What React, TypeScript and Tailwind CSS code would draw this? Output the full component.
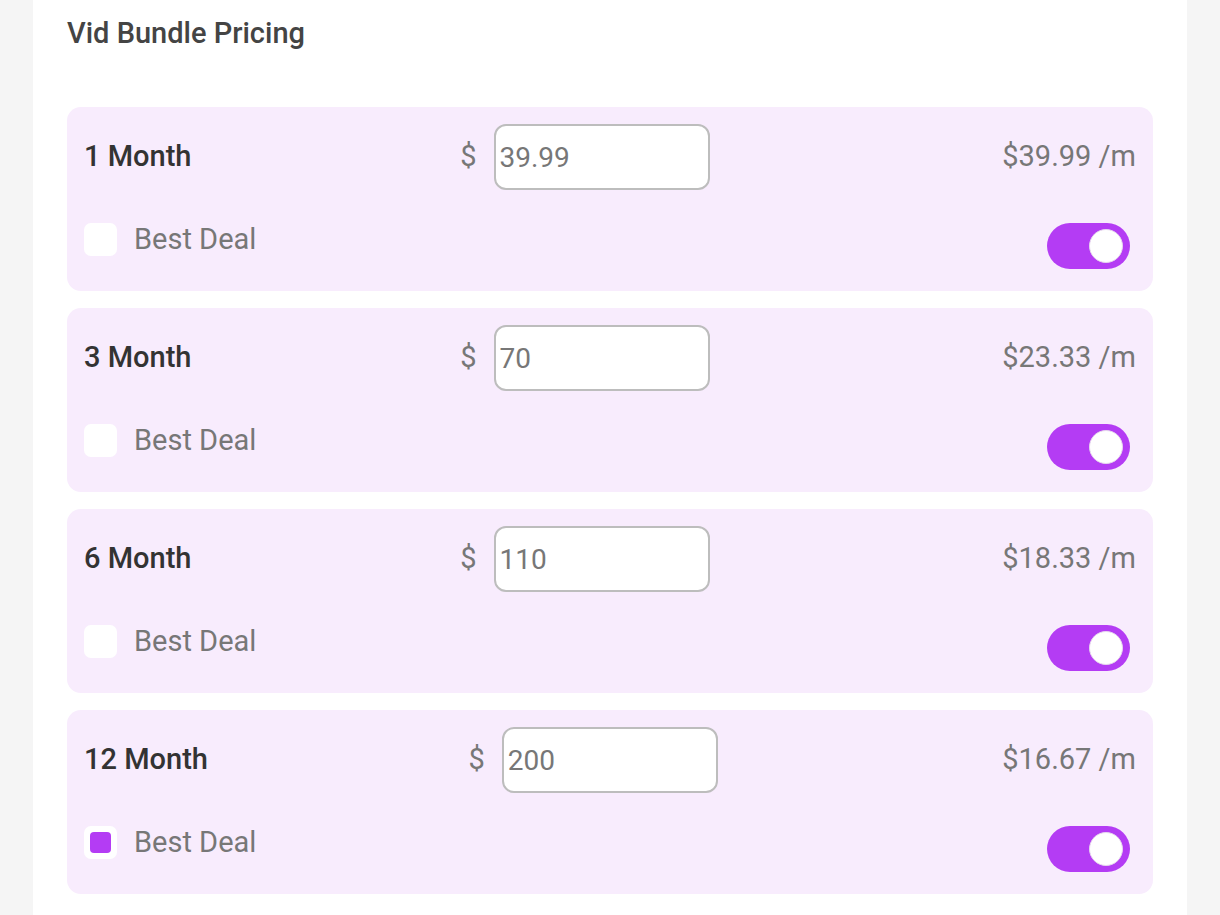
import React, { useState } from 'react';

type Plan = {
  label: string;
  price: string;
  perMonth: string;
  bestDeal: boolean;
};

const initialPlans: Plan[] = [
  { label: '1 Month', price: '39.99', perMonth: '$39.99 /m', bestDeal: false },
  { label: '3 Month', price: '70', perMonth: '$23.33 /m', bestDeal: false },
  { label: '6 Month', price: '110', perMonth: '$18.33 /m', bestDeal: false },
  { label: '12 Month', price: '200', perMonth: '$16.67 /m', bestDeal: true },
];

const PlanCard: React.FC<{ plan: Plan }> = ({ plan }) => {
  const [price, setPrice] = useState(plan.price);
  const [best, setBest] = useState(plan.bestDeal);
  const [enabled, setEnabled] = useState(true);

  return (
    <div className="bg-[#f8ecfd] rounded-[14px] px-[17px] pt-[17px] pb-[22px]">
      <div className="flex items-center justify-between">
        <span className="text-[29px] font-medium text-[#333]">{plan.label}</span>
        <div className="flex items-center gap-[17px] mr-[24px]">
          <span className="text-[29px] text-[#777]">$</span>
          <input
            value={price}
            onChange={(e) => setPrice(e.target.value)}
            className="w-[216px] h-[66px] bg-white border-2 border-[#bdbdbd] rounded-[12px] px-[4px] text-[28px] text-[#777] outline-none"
          />
        </div>
        <span className="text-[29px] text-[#777]">{plan.perMonth}</span>
      </div>
      <div className="flex items-start justify-between mt-[33px]">
        <label className="flex items-center gap-[17px] cursor-pointer" onClick={() => setBest(!best)}>
          <span className="w-[33px] h-[33px] bg-white rounded-[7px] flex items-center justify-center">
            {best && <span className="w-[21px] h-[21px] bg-[#b43cf4] rounded-[4px]" />}
          </span>
          <span className="text-[29px] leading-[33px] text-[#777]">Best Deal</span>
        </label>
        <button
          type="button"
          onClick={() => setEnabled(!enabled)}
          className={`w-[83px] h-[46px] rounded-full flex items-center px-[7px] mr-[6px] ${
            enabled ? 'bg-[#b43cf4] justify-end' : 'bg-[#ccc] justify-start'
          }`}
        >
          <span className="w-[34px] h-[34px] rounded-full bg-white border border-[#e6d6ee]" />
        </button>
      </div>
    </div>
  );
};

export default function App() {
  return (
    <div className="min-h-[915px] bg-[#f5f5f5] px-[33px]" style={{ fontFamily: 'Roboto, "Noto Sans", sans-serif' }}>
      <div className="bg-white min-h-[915px] px-[34px] pt-[14px]">
        <h2 className="text-[29px] font-medium text-[#444] leading-[38px]">Vid Bundle Pricing</h2>
        <div className="mt-[55px] flex flex-col gap-[17px]">
          {initialPlans.map((p) => (
            <PlanCard key={p.label} plan={p} />
          ))}
        </div>
      </div>
    </div>
  );
}
